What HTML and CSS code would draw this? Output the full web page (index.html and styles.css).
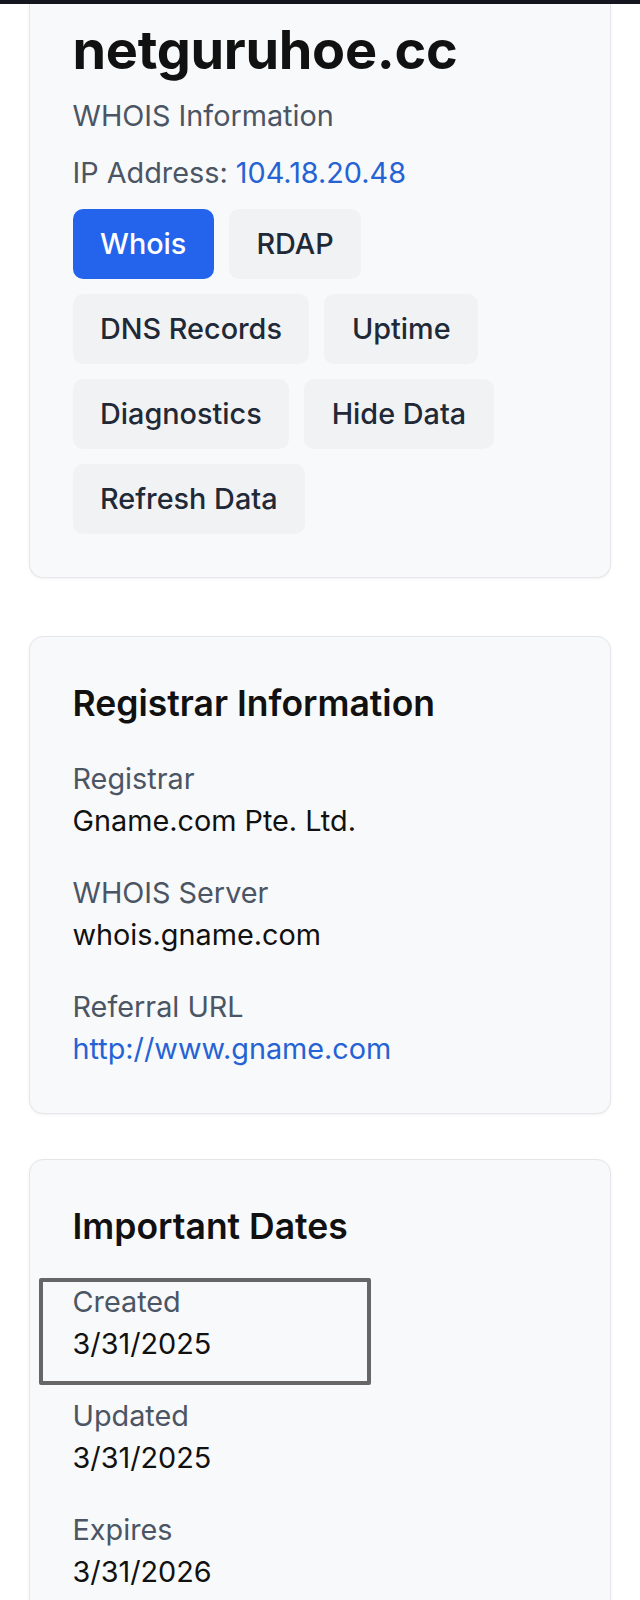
FILE: index.html
```html
<!DOCTYPE html>
<html lang="en">
<head>
<meta charset="utf-8">
<title>netguruhoe.cc - WHOIS Information</title>
<link rel="stylesheet" href="styles.css">
</head>
<body>
<div class="topbar"></div>
<main class="page">
  <section class="card card-head">
    <h1 class="domain">netguruhoe.cc</h1>
    <p class="subtitle">WHOIS Information</p>
    <p class="ip">IP Address: <a class="link" href="#">104.18.20.48</a></p>
    <div class="actions">
      <button class="btn btn-primary">Whois</button>
      <button class="btn">RDAP</button>
      <button class="btn">DNS Records</button>
      <button class="btn">Uptime</button>
      <button class="btn">Diagnostics</button>
      <button class="btn">Hide Data</button>
      <button class="btn">Refresh Data</button>
    </div>
  </section>

  <section class="card card-registrar">
    <h2 class="card-title">Registrar Information</h2>
    <dl class="fields">
      <div class="field">
        <dt>Registrar</dt>
        <dd>Gname.com Pte. Ltd.</dd>
      </div>
      <div class="field">
        <dt>WHOIS Server</dt>
        <dd>whois.gname.com</dd>
      </div>
      <div class="field">
        <dt>Referral URL</dt>
        <dd><a class="link" href="#">http://www.gname.com</a></dd>
      </div>
    </dl>
  </section>

  <section class="card">
    <h2 class="card-title">Important Dates</h2>
    <dl class="fields">
      <div class="field field-marked">
        <dt>Created</dt>
        <dd>3/31/2025</dd>
        <span class="marker"></span>
      </div>
      <div class="field">
        <dt>Updated</dt>
        <dd>3/31/2025</dd>
      </div>
      <div class="field">
        <dt>Expires</dt>
        <dd>3/31/2026</dd>
      </div>
    </dl>
  </section>
</main>
</body>
</html>
```

FILE: styles.css
```css
* {
  box-sizing: border-box;
}

html, body {
  margin: 0;
  padding: 0;
  background: #ffffff;
}

body {
  font-family: Inter, "Noto Sans", "Liberation Sans", sans-serif;
  font-size: 28.8px;
  line-height: 42px;
  color: #111111;
}

.topbar {
  height: 4px;
  background: #15151f;
}

.page {
  padding: 0 29px;
}

.card {
  background: #f8f9fb;
  border: 1.5px solid #e4e6ea;
  border-radius: 14px;
  box-shadow: 0 1px 3px rgba(0, 0, 0, 0.06);
  padding: 42px 42px 43px 42.5px;
  margin-bottom: 45px;
}

.card-head {
  border-top: none;
  border-top-left-radius: 0;
  border-top-right-radius: 0;
  padding-top: 14px;
  margin-bottom: 58px;
}

.domain {
  margin: 0 0 14px;
  font-size: 54px;
  line-height: 63px;
  font-weight: 700;
  color: #111111;
  letter-spacing: -0.3px;
}

.subtitle,
.ip {
  margin: 0 0 15px;
  color: #4b5563;
}

.link {
  color: #2563d4;
  text-decoration: none;
}

.actions {
  display: flex;
  flex-wrap: wrap;
  gap: 15px;
  max-width: 440px;
}

.btn {
  font-family: inherit;
  font-size: 28.8px;
  line-height: 42px;
  font-weight: 500;
  color: #1f2937;
  background: #f1f2f4;
  border: none;
  border-radius: 10px;
  padding: 14px 27.5px;
  height: 70px;
  cursor: pointer;
}

.btn-primary {
  background: #2463eb;
  color: #ffffff;
}

.card-title {
  margin: 0 0 30px;
  font-size: 35.5px;
  line-height: 49px;
  font-weight: 600;
  color: #111111;
}

.fields {
  margin: 0;
  display: flex;
  flex-direction: column;
  gap: 30px;
}

.field {
  position: relative;
}

.field dt {
  color: #4b5563;
}

.field dd {
  margin: 0;
  color: #111111;
}

.marker {
  position: absolute;
  left: -34px;
  top: -3px;
  width: 332px;
  height: 107px;
  border: 4px solid #666666;
  border-radius: 2px;
  pointer-events: none;
}
```
